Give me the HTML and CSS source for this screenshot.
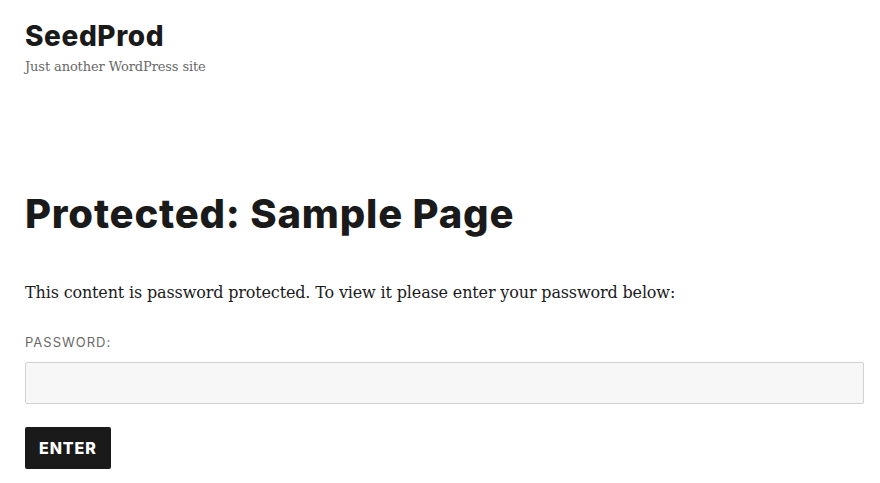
FILE: index.html
```html
<!DOCTYPE html>
<html lang="en">
<head>
<meta charset="utf-8">
<title>Protected: Sample Page – SeedProd</title>
<link rel="stylesheet" href="styles.css">
</head>
<body>
<div class="page">
  <header class="site-header">
    <p class="site-title">SeedProd</p>
    <p class="site-description">Just another WordPress site</p>
  </header>
  <main class="content">
    <h1 class="entry-title">Protected: Sample Page</h1>
    <form class="post-password-form">
      <p class="intro">This content is password protected. To view it please enter your password below:</p>
      <label class="pw-label" for="pwbox">Password:</label>
      <input class="pw-input" id="pwbox" type="password">
      <button class="pw-submit" type="button">Enter</button>
    </form>
  </main>
</div>
</body>
</html>
```

FILE: styles.css
```css
html, body {
  margin: 0;
  padding: 0;
  background: #ffffff;
}
body {
  color: #1a1a1a;
  font-family: "DejaVu Serif", serif;
}
.page {
  padding: 19px 16px 0 25px;
}
.site-header p {
  margin: 0;
}
.site-title {
  font-family: Inter, "DejaVu Sans", sans-serif;
  font-weight: 800;
  font-size: 28px;
  line-height: 35px;
  letter-spacing: 0.6px;
  color: #1a1a1a;
}
.site-description {
  font-size: 13px;
  line-height: 21px;
  letter-spacing: -0.12px;
  color: #686868;
  margin-top: 2px !important;
}
.content {
  display: flex;
  flex-direction: column;
}
.entry-title {
  font-family: Inter, "DejaVu Sans", sans-serif;
  font-weight: 800;
  font-size: 40px;
  line-height: 49px;
  margin: 112px 0 0 0;
  letter-spacing: 0.8px;
}
.post-password-form {
  display: flex;
  flex-direction: column;
  align-items: flex-start;
}
.intro {
  font-size: 16px;
  line-height: 28px;
  letter-spacing: -0.15px;
  margin: 41px 0 0 0;
}
.pw-label {
  font-family: Inter, "DejaVu Sans", sans-serif;
  font-size: 13px;
  line-height: 19px;
  letter-spacing: 1px;
  text-transform: uppercase;
  color: #686868;
  margin-top: 26px;
}
.pw-input {
  align-self: stretch;
  box-sizing: border-box;
  height: 42px;
  margin: 10px 0 0 0;
  background: #f7f7f7;
  border: 1px solid #d1d1d1;
  border-radius: 2px;
  padding: 10px;
}
.pw-submit {
  margin-top: 23px;
  box-sizing: border-box;
  height: 42px;
  padding: 0 14px;
  background: #1a1a1a;
  color: #ffffff;
  border: 0;
  border-radius: 2px;
  font-family: Inter, "DejaVu Sans", sans-serif;
  font-weight: 800;
  font-size: 16px;
  letter-spacing: 0.9px;
  text-transform: uppercase;
}
```
